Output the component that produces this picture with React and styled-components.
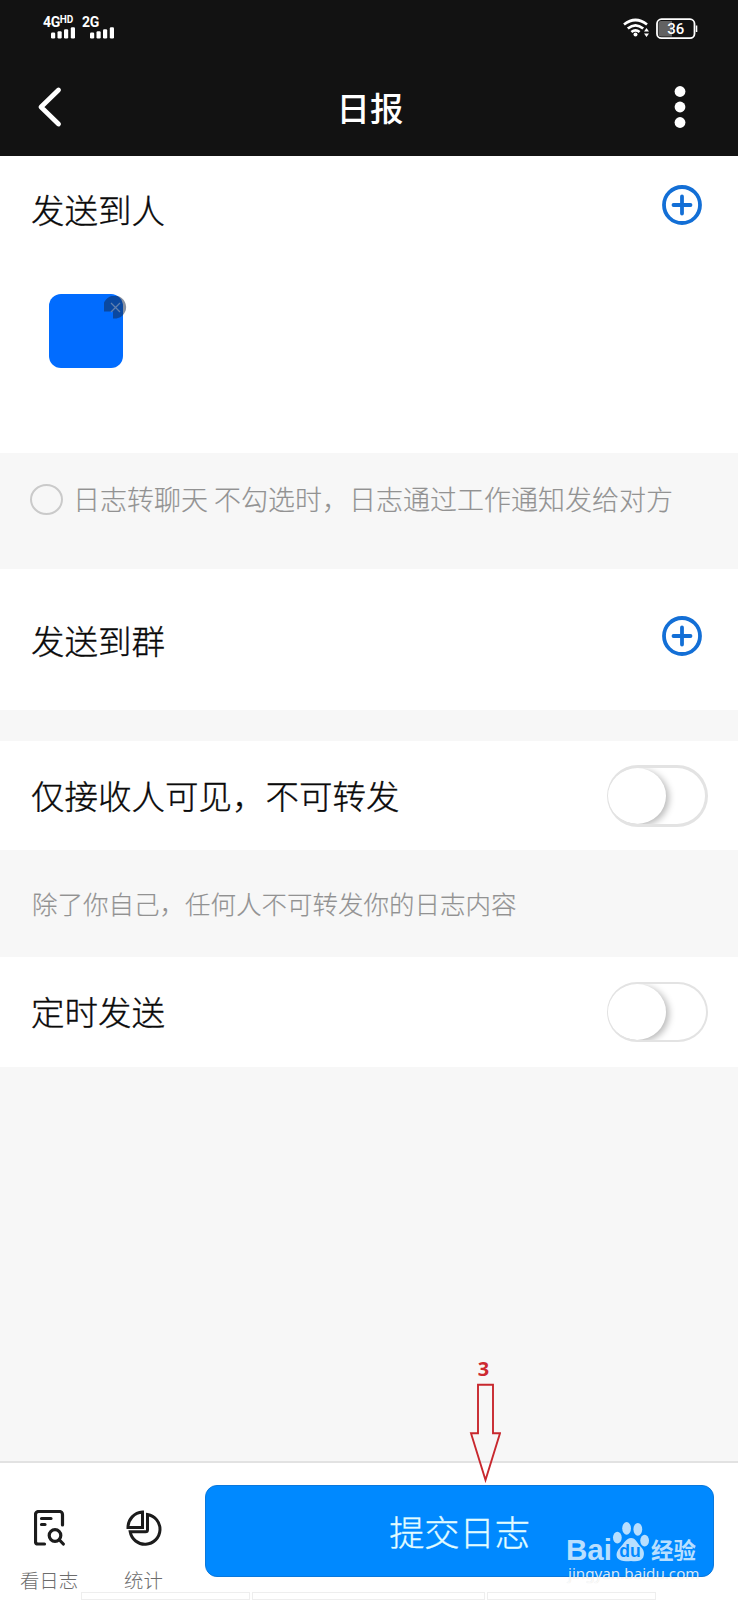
import React from 'react';
import styled, { createGlobalStyle } from 'styled-components';

const GlobalStyle = createGlobalStyle`
  * {
    box-sizing: border-box;
  }

  body {
    margin: 0;
    background: #f7f7f7;
    font-family: 'Noto Sans CJK SC', sans-serif;
  }
`;

const Page = styled.div`
  position: relative;
  display: flex;
  flex-direction: column;
  width: 738px;
  height: 1600px;
  overflow: hidden;
  background: #f7f7f7;
`;

const Header = styled.header`
  height: 156px;
  background: #121212;
  color: #fff;
`;

const StatusBar = styled.div`
  display: flex;
  justify-content: space-between;
  height: 57px;
  padding: 15px 40px 0 42px;
`;

const StatusGroup = styled.div`
  display: flex;
  align-items: flex-start;
  gap: ${(props) => props.$gap || 0}px;
  padding-top: ${(props) => props.$top || 0}px;
`;

const Signal = styled.div`
  display: flex;
  flex-direction: column;
  width: 34px;
  font: 700 14px/14px Roboto, sans-serif;
  white-space: nowrap;

  svg {
    margin: -2px 0 0 8px;
  }
`;

const Network = styled.div`
  display: flex;
  align-items: flex-start;
  height: 14px;
  padding-left: 1px;
  letter-spacing: -0.4px;

  small {
    font-size: 10px;
    line-height: 10px;
    letter-spacing: 0;
  }
`;

const NavBar = styled.div`
  display: grid;
  grid-template-columns: 60px 1fr 60px;
  align-items: center;
  height: 99px;
  padding: 0 28px;
`;

const Title = styled.h1`
  margin: 1px 0 0 2px;
  font-size: 33.4px;
  font-weight: 500;
  line-height: 40px;
  text-align: center;
`;

const IconButton = styled.button`
  display: flex;
  justify-content: ${(props) => props.$align || 'center'};
  padding: 0 ${(props) => props.$right || 0}px 0 0;
  border: 0;
  background: none;
`;

const Section = styled.section`
  height: ${(props) => props.$height}px;
  padding: ${(props) => props.$top || 0}px 30px 0 31px;
  background: #fff;
`;

const Row = styled.div`
  display: flex;
  align-items: center;
  justify-content: space-between;
  height: 64px;
`;

const Label = styled.span`
  margin-top: -3px;
  color: #0a0a0a;
  font-size: 33.5px;
  font-weight: 300;
  line-height: 48px;
  -webkit-text-stroke: 0.35px #0a0a0a;
`;

const AddButton = styled(IconButton)`
  margin: -11px 6px 0 0;
`;

const Receiver = styled.div`
  position: relative;
  width: 74px;
  height: 74px;
  margin: 52px 0 0 18px;
  border-radius: 12px;
  background: #016cff;
`;

const RemoveBadge = styled.span`
  position: absolute;
  top: 2px;
  right: -4px;
  width: 23px;
  height: 23px;
`;

const Note = styled.div`
  display: flex;
  align-items: center;
  height: ${(props) => props.$height}px;
  padding: 0 32px ${(props) => props.$bottom || 0}px;
  color: #929292;
  font-size: ${(props) => props.$size}px;
  font-weight: 300;
  white-space: nowrap;
  -webkit-text-stroke: 0.15px #929292;
`;

const Radio = styled.span`
  width: 33px;
  height: 31px;
  margin: 3px 10px 0 -2px;
  border: 2px solid #cacaca;
  border-radius: 50%;
`;

const Divider = styled.div`
  height: ${(props) => props.$height}px;
`;

const Toggle = styled.button`
  width: 101px;
  height: ${(props) => (props.$slim ? 60 : 62)}px;
  padding: 0;
  border: ${(props) => (props.$slim ? 2 : 3)}px solid #e3e3e3;
  border-left-width: 1px;
  border-radius: 31px;
  background: #fff;
  overflow: hidden;

  &::before {
    content: '';
    display: block;
    width: 58px;
    height: 56px;
    border-radius: 50%;
    background: #fff;
    box-shadow: 3px 2px 7px rgba(0, 0, 0, 0.28);
  }
`;

const Footer = styled.footer`
  display: flex;
  height: 139px;
  margin-top: auto;
  padding: 22px 24px 0 0;
  border-top: 2px solid #e2e2e2;
  background: #fff;
`;

const Tab = styled.div`
  display: flex;
  flex-direction: column;
  align-items: center;
  width: ${(props) => props.$width}px;
  padding-top: 25px;
  color: #6c6c6c;
  font-size: 19.4px;
  font-weight: 300;
  line-height: 28px;

  svg {
    margin-bottom: 20px;
  }
`;

const Submit = styled.button`
  width: 509px;
  height: 92px;
  margin-left: auto;
  padding: 0 0 1px;
  border: 1px solid #0a78dc;
  border-radius: 12px;
  background: #0089ff;
  color: #e2fcff;
  font: 300 35.2px/1 'Noto Sans CJK SC', sans-serif;
  -webkit-text-stroke: 0.3px #e2fcff;
`;

const Overlay = styled.div`
  position: absolute;
  left: ${(props) => props.$x}px;
  top: ${(props) => props.$y}px;
  pointer-events: none;
`;

const Marker = styled(Overlay)`
  display: flex;
  flex-direction: column;
  align-items: center;
  width: 32px;
  color: #cd2a30;
  font: 700 20px/20px 'Noto Sans', sans-serif;

  span {
    margin-right: 3px;
  }

  svg {
    margin-top: 4px;
  }
`;

const Watermark = styled(Overlay)`
  color: #b8dfff;
  white-space: nowrap;
`;

const Brand = styled.div`
  display: flex;
  align-items: flex-end;
  height: 42px;
  font: 700 29.5px/26px 'Liberation Sans', sans-serif;
`;

const BrandName = styled.span`
  margin: 0 0 3px 1px;
  font: 700 22.5px/22px 'Noto Sans CJK SC', sans-serif;
`;

const Url = styled.div`
  margin: 1px 0 0 2px;
  color: rgba(255, 255, 255, 0.85);
  font: 400 15.2px/18px 'Noto Sans', sans-serif;
  text-shadow: 0 0 1px rgba(0, 0, 0, 0.14);
`;

const BottomStrip = styled(Overlay)`
  display: flex;
  gap: 2px;
`;

const StripPart = styled.span`
  width: ${(props) => props.$width}px;
  height: 8px;
  border: 1px solid #eee;
`;

function SignalBars() {
  return (
    <svg width="26" height="12" viewBox="0 0 26 12" fill="#fff">
      <rect x="1" y="5.5" width="4.2" height="6" rx="1.2" />
      <rect x="7.5" y="4.2" width="4.2" height="7.3" rx="1.2" />
      <rect x="14" y="2.2" width="4.2" height="9.3" rx="1.2" />
      <rect x="20.800" y="0.2" width="4.2" height="11.3" rx="1.2" />
    </svg>
  );
}

function WifiIcon() {
  return (
    <svg width="27" height="20" viewBox="0 0 27 20" fill="none" stroke="#fff" strokeWidth="2.7">
      <path d="M1 6.500Q12.500-2.500 24 6.500" />
      <path d="M4.800 10.500Q12.500 4.200 20.200 10.500" />
      <path d="M8.400 14Q12.500 10.600 16.600 14" />
      <circle cx="12.500" cy="16.500" r="2" fill="#fff" stroke="none" />
      <path d="M21 13.500l2.500-3.500 2.500 3.500zM21 15.500l2.500 3.500 2.500-3.500z" fill="#fff" stroke="none" />
    </svg>
  );
}

function Battery() {
  return (
    <svg width="42" height="22" viewBox="0 0 42 22">
      <rect x="1" y="1.200" width="37.500" height="19" rx="4.500" fill="none" stroke="#fff" strokeWidth="1.800" />
      <path d="M5 3h11v15.500H5a2.500 2.500 0 0 1-2.500-2.500V5.500A2.500 2.500 0 0 1 5 3z" fill="#626262" />
      <rect x="39.800" y="7.500" width="1.500" height="6.500" fill="#fff" />
      <text x="19.800" y="16" fill="#fff" textAnchor="middle" fontFamily="Roboto" fontWeight="500" fontSize="15">36</text>
    </svg>
  );
}

function PlusCircle() {
  return (
    <svg width="40" height="40" viewBox="0 0 40 40" fill="none" stroke="#136fd6" strokeWidth="3.800">
      <circle cx="20" cy="20" r="18" />
      <path d="M20 11.500v17M11.500 20h17" strokeLinecap="round" />
    </svg>
  );
}

function LogIcon() {
  return (
    <svg width="31" height="36" viewBox="0 0 31 36" fill="none" stroke="#1c1c1c" strokeWidth="3.200" strokeLinecap="round">
      <path d="M28.500 15V4.500a3 3 0 0 0-3-3h-21a3 3 0 0 0-3 3v27a2.500 2.500 0 0 0 2.500 2.500h6.500" />
      <path d="M7.500 8.500h9.500M7.500 14.500h3.500" />
      <circle cx="21" cy="25.500" r="5.800" />
      <path d="M25.500 30l3.800 4" />
    </svg>
  );
}

function PieIcon() {
  return (
    <svg width="36" height="36" viewBox="0 0 36 36" fill="none" stroke="#1c1c1c" strokeWidth="3">
      <path d="M16.500 2v15.500H2A15.500 15.500 0 0 1 16.500 2z" />
      <path d="M21.500 4.500A15 15 0 1 1 4.200 21.800H19.500a2 2 0 0 0 2-2z" />
    </svg>
  );
}

function Paw() {
  return (
    <svg width="38" height="42" viewBox="0 0 39 42" fill="#b8dfff">
      <ellipse cx="5.500" cy="16.500" rx="4.500" ry="6" />
      <ellipse cx="15" cy="7" rx="4.500" ry="6.500" />
      <ellipse cx="26.500" cy="8" rx="4.500" ry="6.500" />
      <ellipse cx="33.500" cy="19.500" rx="4.500" ry="6" />
      <path d="M19.500 17c5 0 6 5 10 9 3.500 3.500 4 7 2.500 11-2 4-7 4-12.500 3.500-5 .5-11 1-14-3-2-4 0-8 3-11 4-4 6-9.500 11-9.500z" />
      <text x="18.500" y="36.500" fill="#0089ff" textAnchor="middle" fontFamily="Liberation Sans" fontWeight="700" fontSize="18">du</text>
    </svg>
  );
}

function App() {
  return (
    <Page>
      <GlobalStyle />
      <Header>
        <StatusBar>
          <StatusGroup $gap={5}>
            <Signal>
              <Network>4G<small>HD</small></Network>
              <SignalBars />
            </Signal>
            <Signal>
              <Network>2G</Network>
              <SignalBars />
            </Signal>
          </StatusGroup>
          <StatusGroup $gap={6} $top={3}>
            <WifiIcon />
            <Battery />
          </StatusGroup>
        </StatusBar>
        <NavBar>
          <IconButton $align="flex-start">
            <svg width="36" height="44" viewBox="0 0 36 44" fill="none" stroke="#fff" strokeWidth="4.800" strokeLinecap="round" strokeLinejoin="round">
              <path d="M30.500 5L13 22 30.500 39" />
            </svg>
          </IconButton>
          <Title>日报</Title>
          <IconButton $align="flex-end" $right={24}>
            <svg width="12" height="44" viewBox="0 0 12 44" fill="#fff">
              <circle cx="6" cy="6.500" r="5.400" />
              <circle cx="6" cy="22" r="5.400" />
              <circle cx="6" cy="37.500" r="5.400" />
            </svg>
          </IconButton>
        </NavBar>
      </Header>

      <Section $height={297} $top={22}>
        <Row>
          <Label>发送到人</Label>
          <AddButton><PlusCircle /></AddButton>
        </Row>
        <Receiver>
          <RemoveBadge>
            <svg width="23" height="23" viewBox="0 0 23 23">
              <path d="M0 15.500A11.500 11.500 0 1 1 9 22.500V15.500z" fill="rgba(20,35,65,0.5)" />
              <path d="M7 7l9 9M16 7l-9 9" stroke="#5f7fae" strokeWidth="1.300" />
            </svg>
          </RemoveBadge>
        </Receiver>
      </Section>

      <Note $height={116} $bottom={26} $size={27}>
        <Radio />
        日志转聊天 不勾选时，日志通过工作通知发给对方
      </Note>

      <Section $height={141} $top={40}>
        <Row>
          <Label>发送到群</Label>
          <AddButton><PlusCircle /></AddButton>
        </Row>
      </Section>

      <Divider $height={31} />

      <Section $height={109} $top={23}>
        <Row>
          <Label>仅接收人可见，不可转发</Label>
          <Toggle />
        </Row>
      </Section>

      <Note $height={107} $bottom={3} $size={25.5}>除了你自己，任何人不可转发你的日志内容</Note>

      <Section $height={110} $top={23}>
        <Row>
          <Label>定时发送</Label>
          <Toggle $slim />
        </Row>
      </Section>

      <Footer>
        <Tab $width={98}>
          <LogIcon />
          看日志
        </Tab>
        <Tab $width={91}>
          <PieIcon />
          统计
        </Tab>
        <Submit>提交日志</Submit>
      </Footer>

      <BottomStrip $x={81} $y={1592}>
        <StripPart $width={169} />
        <StripPart $width={233} />
        <StripPart $width={169} />
      </BottomStrip>

      <Marker $x={469} $y={1359}>
        <span>3</span>
        <svg width="32" height="100" viewBox="0 0 32 100" fill="none" stroke="#c8282e" strokeWidth="1.900">
          <path d="M9 1.800h15v48.500h7L16.500 97 2 50.300h7z" />
        </svg>
      </Marker>

      <Watermark $x={566} $y={1521}>
        <Brand>
          Bai
          <Paw />
          <BrandName>经验</BrandName>
        </Brand>
        <Url>jingyan.baidu.com</Url>
      </Watermark>
    </Page>
  );
}

export default App;
